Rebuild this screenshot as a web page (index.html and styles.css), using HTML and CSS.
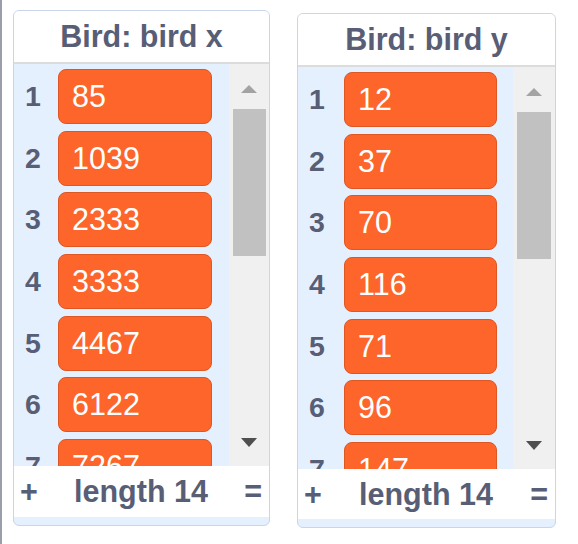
FILE: index.html
```html
<!DOCTYPE html>
<html lang="en">
<head>
  <meta charset="UTF-8">
  <title>Bird lists</title>
  <link rel="stylesheet" href="styles.css">
</head>
<body>
  <div class="stage">
    <!-- list monitor: bird x -->
    <div class="monitor first">
      <div class="monitor-title">Bird: bird x</div>
      <div class="monitor-body">
        <div class="rows">
          <div class="row"><span class="index">1</span><span class="value">85</span></div>
          <div class="row"><span class="index">2</span><span class="value">1039</span></div>
          <div class="row"><span class="index">3</span><span class="value">2333</span></div>
          <div class="row"><span class="index">4</span><span class="value">3333</span></div>
          <div class="row"><span class="index">5</span><span class="value">4467</span></div>
          <div class="row"><span class="index">6</span><span class="value">6122</span></div>
          <div class="row"><span class="index">7</span><span class="value">7267</span></div>
        </div>
        <div class="scrollbar">
          <div class="arrow up"></div>
          <div class="thumb"></div>
          <div class="track"></div>
          <div class="arrow down"></div>
        </div>
      </div>
      <div class="monitor-footer">
        <span class="add">+</span>
        <span class="length">length 14</span>
        <span class="resize">=</span>
      </div>
    </div>

    <!-- list monitor: bird y -->
    <div class="monitor second">
      <div class="monitor-title">Bird: bird y</div>
      <div class="monitor-body">
        <div class="rows">
          <div class="row"><span class="index">1</span><span class="value">12</span></div>
          <div class="row"><span class="index">2</span><span class="value">37</span></div>
          <div class="row"><span class="index">3</span><span class="value">70</span></div>
          <div class="row"><span class="index">4</span><span class="value">116</span></div>
          <div class="row"><span class="index">5</span><span class="value">71</span></div>
          <div class="row"><span class="index">6</span><span class="value">96</span></div>
          <div class="row"><span class="index">7</span><span class="value">147</span></div>
        </div>
        <div class="scrollbar">
          <div class="arrow up"></div>
          <div class="thumb"></div>
          <div class="track"></div>
          <div class="arrow down"></div>
        </div>
      </div>
      <div class="monitor-footer">
        <span class="add">+</span>
        <span class="length">length 14</span>
        <span class="resize">=</span>
      </div>
    </div>
  </div>
</body>
</html>
```

FILE: styles.css
```css
body {
  margin: 0;
  background: #fff;
  font-family: 'Liberation Sans', Arial, sans-serif;
  color: #575e75;
}
/* Stage with the grey divider on the left */
.stage {
  display: flex;
  align-items: flex-start;
  gap: 27px;
  min-height: 544px;
  box-sizing: border-box;
  border-left: 2px solid #9a9eab;
  padding: 10px 0 0 11px;
}
/* One list monitor */
.monitor {
  width: 257px;
  box-sizing: border-box;
  border: 1px solid #c9d5e8;
  border-radius: 6px;
  background: #e5f0ff;
  overflow: hidden;
}
.monitor.second {
  width: 259px;
  margin-top: 3px;
}
.monitor-title {
  height: 51px;
  background: #fff;
  border-bottom: 2px solid #dcdcdc;
  font-size: 30.5px;
  font-weight: bold;
  text-align: center;
  line-height: 51px;
}
.monitor-body {
  display: flex;
  height: 402px;
}
/* List rows */
.rows {
  flex: 1;
  display: flex;
  flex-direction: column;
  gap: 6.7px;
  padding-top: 5px;
  overflow: hidden;
}
.row {
  display: flex;
  align-items: center;
  flex-shrink: 0;
  height: 55px;
}
.index {
  width: 44px;
  box-sizing: border-box;
  padding-right: 6px;
  flex-shrink: 0;
  text-align: center;
  font-size: 28.5px;
  font-weight: bold;
}
.value {
  width: 154px;
  height: 55px;
  box-sizing: border-box;
  padding-left: 13px;
  background: #fd652a;
  border: 1px solid #de5621;
  border-radius: 8px;
  color: #fff;
  font-size: 30.5px;
  line-height: 53px;
}
.second .value {
  width: 153px;
  margin-left: 2px;
}
/* Scrollbar */
.scrollbar {
  width: 40px;
  display: flex;
  flex-direction: column;
  align-items: center;
  background: #f0f0f0;
}
.second .scrollbar {
  width: 42px;
}
.arrow {
  width: 0;
  height: 0;
  border-left: 8.5px solid transparent;
  border-right: 8.5px solid transparent;
}
.arrow.up {
  margin-top: 21px;
  border-bottom: 8px solid #a3a3a3;
}
.arrow.down {
  margin-bottom: 19px;
  border-top: 9px solid #4f4f4f;
}
.thumb {
  width: 33px;
  height: 147px;
  margin-top: 16px;
  background: #c1c1c1;
}
.second .thumb {
  width: 34px;
}
.track {
  flex: 1;
}
/* Footer */
.monitor-footer {
  height: 51px;
  margin-bottom: 8px;
  background: #fff;
  display: flex;
  align-items: center;
  justify-content: space-between;
  padding: 0 7px 0 6px;
  font-size: 30.5px;
  font-weight: bold;
}
.second .monitor-footer {
  height: 50px;
}
```
